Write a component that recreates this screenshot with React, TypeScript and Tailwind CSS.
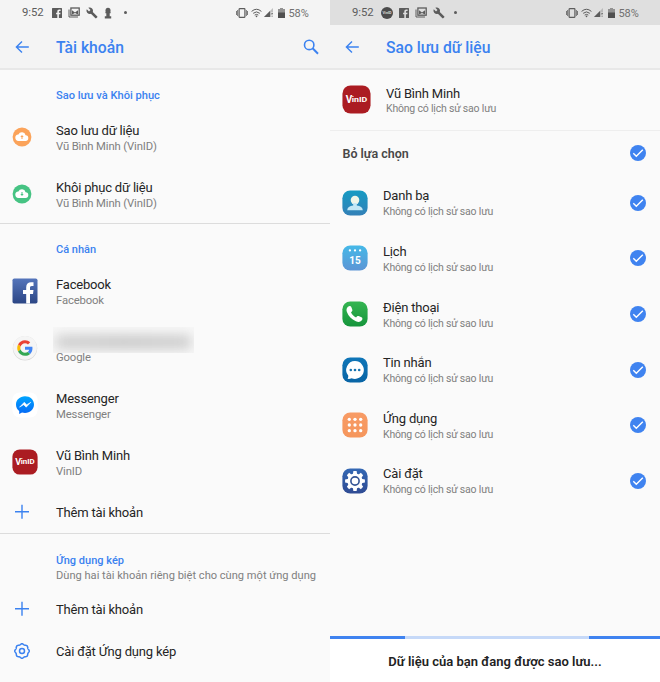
import type { ReactNode } from "react";

const BLUE = "#3b82f0";

function StatusBar({ withVin = false }: { withVin?: boolean }) {
  return (
    <div
      className={
        withVin
          ? "flex h-[25px] items-center bg-[#dfdfdf] px-[22px] text-[#5c5c5c]"
          : "flex h-[25px] items-center bg-[#f4f4f4] px-[22px] text-[#5c5c5c]"
      }
    >
      <span className="w-[30px] shrink-0 whitespace-nowrap pt-px text-[11.3px] leading-none tracking-[-0.1px]">9:52</span>
      {withVin && (
        <svg className="-ml-px mr-[6px] shrink-0" width="12" height="12" viewBox="0 0 12 12">
          <circle cx="6" cy="6" r="6" fill="#4c4c4c" />
          <text x="6" y="7.4" textAnchor="middle" fontSize="3.8" fontWeight="700" fill="#d8d8d8">VinID</text>
        </svg>
      )}
      <svg className="shrink-0" width="10" height="10" viewBox="0 0 10 10">
        <rect width="10" height="10" rx=".5" fill="currentColor" />
        <path d="M6.9 10V6.2H8.3L8.5 4.7H6.9V3.8c0-.5.2-.7.8-.7h.9V1.6H7.3C5.9 1.6 5.3 2.5 5.3 3.6v1.1H4.1v1.5h1.2V10z" className={withVin ? "fill-[#dfdfdf]" : "fill-[#f4f4f4]"} />
      </svg>
      <svg className="ml-[6px] shrink-0" width="12" height="11" viewBox="0 0 12 11" fill="none">
        <path d="M1 2.5V10h9" stroke="currentColor" strokeWidth="1" />
        <rect x="2.9" y="1" width="8.3" height="7.2" stroke="currentColor" strokeWidth="1.3" />
        <path d="M4 7.5V3.2L7 5.5l3-2.3v4.3L7 6z" fill="currentColor" />
      </svg>
      <svg className="ml-[6px] shrink-0" width="12" height="12" viewBox="0 0 24 24" fill="currentColor">
        <path d="M22.7 19l-9.1-9.1c.9-2.3.4-5-1.5-6.9-2-2-5-2.4-7.4-1.3L9 6 6 9 1.6 4.7C.4 7.1.9 10.1 2.9 12.1c1.9 1.9 4.6 2.4 6.9 1.5l9.1 9.1c.4.4 1 .4 1.4 0l2.3-2.3c.5-.4.5-1.1.1-1.4z" />
      </svg>
      {!withVin && (
        <svg className="ml-[6px] shrink-0" width="8" height="12" viewBox="0 0 8 12" fill="currentColor">
          <circle cx="4" cy="3.2" r="2.5" />
          <path d="M1.4 4.6h5.2v1.6H5.7v3.1H7.2v2.200H.8V9.300h1.500V6.200H1.400z" />
        </svg>
      )}
      <span className={withVin ? "ml-[9px] size-[3px] rounded-full bg-current" : "ml-[12px] size-[3px] rounded-full bg-current"} />
      <span className="flex-1" />
      <svg className="shrink-0" width="12" height="10" viewBox="0 0 12 10" fill="none" stroke="currentColor">
        <rect x="3.1" y=".7" width="5.8" height="8.6" rx=".5" strokeWidth="1.2" />
        <path d="M1.6 2v6M.5 3v4M10.4 2v6M11.5 3v4" strokeWidth=".8" />
      </svg>
      <svg className="ml-[3px] shrink-0" width="11" height="10" viewBox="0 0 11 10" fill="none" stroke="currentColor">
        <path d="M.6 3.4Q5.5-.9 10.4 3.4M2.2 5.3Q5.5 2.5 8.8 5.3M3.7 7.1Q5.5 5.7 7.3 7.1" strokeWidth="1" />
        <circle cx="5.5" cy="8.4" r=".8" fill="currentColor" stroke="none" />
      </svg>
      <svg className="ml-[2px] shrink-0" width="9" height="9" viewBox="0 0 9 9">
        <path d="M0 9L9 0v9z" fill="#aaa" opacity=".7" />
        <path d="M0 9L6 3v6z" fill="currentColor" />
        <path d="M7 4.5h2V9H7z" className={withVin ? "fill-[#dfdfdf]" : "fill-[#f4f4f4]"} />
        <path d="M7.4 5l1.4 1.5M8.8 5L7.4 6.5M8.1 7.6v1.2" stroke="currentColor" strokeWidth=".8" />
      </svg>
      <svg className="ml-[5px] shrink-0" width="7" height="10" viewBox="0 0 7 10">
        <path d="M2 0h3v1H7v9H0V1h2z" fill="#929292" />
        <path d="M0 4.5h7V10H0z" fill="#505050" />
      </svg>
      <span className="ml-[4px] w-[19.5px] shrink-0 whitespace-nowrap pt-px text-[11px] leading-none tracking-[-0.1px] text-[#707070]">58%</span>
    </div>
  );
}

function AppBar({ title, search = false }: { title: string; search?: boolean }) {
  return (
    <header className="flex h-[45px] items-center border-b-2 border-[#e8e8e8] bg-[#f4f4f4] pl-[15px] pr-[11px]">
      <svg width="14" height="14" viewBox="0 0 14 14" fill="none" stroke={BLUE} strokeWidth="1.4">
        <path d="M13.8 7H1.5M7 1.4L1.4 7L7 12.6" />
      </svg>
      <h1 className="ml-[27px] flex-1 pt-[3px] text-[15.7px] font-medium leading-none text-[#3b82f0]">{title}</h1>
      {search && (
        <svg width="16" height="16" viewBox="0 0 16 16" fill="none" stroke={BLUE}>
          <circle cx="6.2" cy="5.9" r="4.7" strokeWidth="1.6" />
          <path d="M9.6 9.3L15 14.7" strokeWidth="2" />
        </svg>
      )}
    </header>
  );
}

function CloudIcon({ color, down = false }: { color: string; down?: boolean }) {
  return (
    <svg width="20" height="20" viewBox="0 0 20 20">
      <circle cx="10" cy="10" r="9.4" fill={color} />
      <path d="M13.6 8.2A3.9 3.9 0 0 0 6.4 7.4 3.25 3.25 0 0 0 6.7 13.9H13.3A2.85 2.85 0 0 0 13.6 8.2z" fill="#fff" />
      <path d={down ? "M9.5 7.9h1v2h1.2L10 11.9 8.3 9.9h1.2z" : "M9.5 11.9h1v-2h1.2L10 7.9 8.3 9.9h1.2z"} fill={color} />
    </svg>
  );
}

function VinIcon({ size = 26 }: { size?: number }) {
  return (
    <svg width={size} height={size} viewBox="0 0 26 26">
      <rect x=".4" y=".4" width="25.2" height="25.2" rx="7.4" fill="#ab1c22" />
      <text x="3.3" y="16" fontSize="9" fontWeight="700" fill="#fff">V</text>
      <text x="8.7" y="15.4" fontSize="7.2" fontWeight="700" fill="#fff" textLength="14" lengthAdjust="spacingAndGlyphs">inID</text>
    </svg>
  );
}

function FacebookIcon() {
  return (
    <svg width="26" height="26" viewBox="0 0 26 26">
      <defs>
        <linearGradient id="fb" x2="0" y2="1">
          <stop stopColor="#5575bb" />
          <stop offset="1" stopColor="#2c4685" />
        </linearGradient>
      </defs>
      <rect x=".5" y=".5" width="25" height="25" rx="1.8" fill="url(#fb)" />
      <path d="M14.2 25.5V15.9H11V12.1h3.2V9.3c0-3.3 1.9-5 4.9-5h2.4v3.6h-1.7c-1.4 0-1.8.7-1.8 1.8v2.4h3.5l-.5 3.8h-3v9.6z" fill="#fff" />
    </svg>
  );
}

function GoogleIcon() {
  return (
    <svg width="26" height="26" viewBox="0 0 26 26">
      <circle cx="13" cy="13.3" r="12.2" fill="#d9d9d9" />
      <circle cx="13" cy="12.8" r="11.9" fill="#f5f5f5" />
      <g transform="translate(5.2 5.2) scale(.325)">
        <path fill="#EA4335" d="M24 9.5c3.54 0 6.71 1.22 9.21 3.6l6.85-6.85C35.9 2.38 30.47 0 24 0 14.62 0 6.51 5.38 2.56 13.22l7.98 6.19C12.43 13.72 17.74 9.5 24 9.5z" />
        <path fill="#4285F4" d="M46.98 24.55c0-1.57-.15-3.09-.38-4.55H24v9.02h12.94c-.58 2.96-2.26 5.48-4.78 7.18l7.73 6c4.51-4.18 7.09-10.36 7.09-17.65z" />
        <path fill="#FBBC05" d="M10.53 28.59c-.48-1.45-.76-2.99-.76-4.59s.27-3.14.76-4.59l-7.98-6.19C.92 16.46 0 20.12 0 24c0 3.88.92 7.54 2.56 10.78l7.97-6.19z" />
        <path fill="#34A853" d="M24 48c6.48 0 11.93-2.13 15.89-5.81l-7.73-6c-2.15 1.45-4.92 2.3-8.16 2.3-6.26 0-11.57-4.22-13.47-9.91l-7.98 6.19C6.51 42.62 14.62 48 24 48z" />
      </g>
    </svg>
  );
}

function MessengerIcon() {
  return (
    <svg width="26" height="26" viewBox="0 0 26 26">
      <defs>
        <linearGradient id="ms" x2="0" y2="1">
          <stop stopColor="#00a5ff" />
          <stop offset="1" stopColor="#0568f5" />
        </linearGradient>
      </defs>
      <rect x=".5" y=".5" width="25" height="25" rx="7" fill="#fff" />
      <path d="M13 4.3c-5.1 0-9 3.6-9 8.3 0 2.7 1.2 4.9 3.2 6.4v2.9l2.8-1.3c.9.3 1.9.4 3 .4 5.1 0 9-3.6 9-8.4s-3.9-8.3-9-8.3z" fill="url(#ms)" />
      <path d="M7.5 15.2l4.8-5 2.4 2.5 4.2-2.5-4.7 5-2.5-2.5z" fill="#fff" stroke="#fff" strokeWidth=".5" />
    </svg>
  );
}

function PlusIcon() {
  return (
    <svg width="20" height="20" viewBox="0 0 20 20" stroke={BLUE} strokeWidth="1.4">
      <path d="M10 2.8v14M3 9.8h14" />
    </svg>
  );
}

const scallop =
  Array.from({ length: 97 }, (_, i) => {
    const a = (i / 96) * Math.PI * 2;
    const r = 6.8 + 0.45 * Math.cos(a * 8);
    return `${i ? "L" : "M"}${(10 + r * Math.cos(a)).toFixed(2)} ${(10 + r * Math.sin(a)).toFixed(2)}`;
  }).join("") + "Z";

function GearOutline() {
  return (
    <svg width="20" height="20" viewBox="0 0 20 20" fill="none" stroke={BLUE} strokeWidth="1.5">
      <path d={scallop} />
      <circle cx="10" cy="10" r="2.5" />
    </svg>
  );
}

function Tile({ id, from, to, children }: { id: string; from: string; to: string; children: ReactNode }) {
  return (
    <svg width="26" height="26" viewBox="0 0 26 26">
      <defs>
        <linearGradient id={id} x2="0" y2="1">
          <stop stopColor={from} />
          <stop offset="1" stopColor={to} />
        </linearGradient>
      </defs>
      <rect x=".4" y=".4" width="25.2" height="25.2" rx="7.8" fill={`url(#${id})`} />
      {children}
    </svg>
  );
}

const items: { title: string; icon: ReactNode }[] = [
  {
    title: "Danh bạ",
    icon: (
      <Tile id="t1" from="#169bc3" to="#3380b7">
        <circle cx="13" cy="10.1" r="4.3" fill="#eef5e8" />
        <path d="M11.2 13h3.6v2.6c3.7.6 5.7 1.9 6 4.6H5.2c.3-2.7 2.3-4 6-4.6z" fill="#c2e7f5" />
      </Tile>
    ),
  },
  {
    title: "Lịch",
    icon: (
      <Tile id="t2" from="#45b9e8" to="#5c95d5">
        <g fill="#fff">
          <circle cx="7.9" cy="5.4" r="1.15" />
          <circle cx="13" cy="5.4" r="1.15" />
          <circle cx="18.1" cy="5.4" r="1.15" />
          <text x="13" y="18.7" textAnchor="middle" fontSize="11" fontWeight="700" textLength="11.5" lengthAdjust="spacingAndGlyphs">15</text>
        </g>
      </Tile>
    ),
  },
  {
    title: "Điện thoại",
    icon: (
      <Tile id="t3" from="#35b552" to="#15953b">
        <path transform="translate(-.6 0)" d="M6.6 5.8c1.3-1.2 2.8-1 3.3.2l1 2.7c.4 1-.3 1.8-1.3 2.5 1 2.3 2.7 4.1 5.1 5.2.7-1 1.5-1.7 2.5-1.3l2.9 1.2c1.2.5 1.2 2.2.1 3.3-1.3 1.5-3.4 1.7-5.7.6-4.4-2-7.4-5-9-9.2-.8-2.1-.3-4.1 1.1-5.2z" fill="#fff" />
      </Tile>
    ),
  },
  {
    title: "Tin nhắn",
    icon: (
      <Tile id="t4" from="#0f76b8" to="#0864a5">
        <path d="M13 4.1a8.9 8.9 0 1 1-3.5 17.1c-1.1.7-2.7.8-4 .6.8-1 .9-2.3.7-3.2A8.9 8.9 0 0 1 13 4.1z" fill="#fff" />
        <g fill="#1673b0">
          <circle cx="8.8" cy="13" r="1.3" />
          <circle cx="13" cy="13" r="1.3" />
          <circle cx="17.2" cy="13" r="1.3" />
        </g>
      </Tile>
    ),
  },
  {
    title: "Ứng dụng",
    icon: (
      <Tile id="t5" from="#f89b65" to="#f5965c">
        {[7.3, 13, 18.7].map((y) =>
          [7.3, 13, 18.7].map((x) => <circle key={`${x}-${y}`} cx={x} cy={y} r="1.65" fill="#fff" />),
        )}
      </Tile>
    ),
  },
  {
    title: "Cài đặt",
    icon: (
      <Tile id="t6" from="#3468b4" to="#2f4b93">
        <g fill="#fff">
          {[0, 45, 90, 135, 180, 225, 270, 315].map((a) => (
            <path key={a} d="M10.7 7l.7-3.9h3.2l.7 3.9z" transform={`rotate(${a} 13 13)`} />
          ))}
          <circle cx="13" cy="13" r="7.6" />
        </g>
        <circle cx="13" cy="13" r="4.1" fill="none" stroke="#345495" strokeWidth="1.6" />
      </Tile>
    ),
  },
];

function Check() {
  return (
    <svg width="16" height="16" viewBox="0 0 16 16">
      <circle cx="8" cy="8" r="8" fill="#3f83f0" />
      <path d="M3.3 8.2l3 3 6.5-6.5" fill="none" stroke="#fff" strokeWidth="1.4" />
    </svg>
  );
}

function Row({ icon, title, sub }: { icon: ReactNode; title?: string; sub: string }) {
  return (
    <div className="flex h-[57px] items-center pl-3">
      <div className="w-[44px] shrink-0 pb-px">{icon}</div>
      <div className="pt-[3px]">
        {title ? (
          <div className="h-4 whitespace-nowrap text-[13px] leading-4 tracking-[-0.19px] text-[#252525]">{title}</div>
        ) : (
          <div className="-mb-[3px] -ml-[3px] -mt-[7px] h-[26px] w-[141px] overflow-hidden bg-[#f8f8f8]">
            <div className="ml-[3px] mt-[8px] h-[14px] w-[135px] bg-linear-to-r from-[#cfcfcf] via-[#c8c8c8] to-[#cecece] blur-[6px]" />
          </div>
        )}
        <div className="h-4 whitespace-nowrap text-[11.3px] leading-4 tracking-[-0.14px] text-[#808080]">{sub}</div>
      </div>
    </div>
  );
}

function ActionRow({ icon, title }: { icon: ReactNode; title: string }) {
  return (
    <div className="flex h-[42px] items-center pl-3">
      <div className="w-[44px] shrink-0">{icon}</div>
      <div className="whitespace-nowrap pt-[2px] text-[13px] leading-4 tracking-[-0.19px] text-[#252525]">{title}</div>
    </div>
  );
}

export default function App() {
  return (
    <div className="flex h-[682px] w-[660px] overflow-hidden bg-[#fafafa] font-['Roboto',sans-serif]">
      <section className="flex w-[330px] shrink-0 flex-col">
        <StatusBar />
        <AppBar title="Tài khoản" search />
        <div className="h-[154px] border-b border-[#dcdcdc]">
          <h2 className="h-[39px] pl-14 pt-[18px] text-[11.1px] font-medium leading-4 text-[#3b82f0]">Sao lưu và Khôi phục</h2>
          <Row icon={<CloudIcon color="#fba35a" />} title="Sao lưu dữ liệu" sub="Vũ Bình Minh (VinID)" />
          <Row icon={<CloudIcon color="#46c383" down />} title="Khôi phục dữ liệu" sub="Vũ Bình Minh (VinID)" />
        </div>
        <div className="h-[310px] border-b border-[#dcdcdc]">
          <h2 className="h-[39px] pl-14 pt-[18px] text-[11px] font-medium leading-4 text-[#3b82f0]">Cá nhân</h2>
          <Row icon={<FacebookIcon />} title="Facebook" sub="Facebook" />
          <Row icon={<GoogleIcon />} sub="Google" />
          <Row icon={<MessengerIcon />} title="Messenger" sub="Messenger" />
          <Row icon={<VinIcon />} title="Vũ Bình Minh" sub="VinID" />
          <ActionRow icon={<PlusIcon />} title="Thêm tài khoản" />
        </div>
        <div>
          <div className="h-[54px] whitespace-nowrap pl-14 pt-[18px]">
            <h2 className="text-[11px] font-medium leading-[17px] text-[#3b82f0]">Ứng dụng kép</h2>
            <p className="text-[11.1px] leading-[14px] text-[#808080]">Dùng hai tài khoản riêng biệt cho cùng một ứng dụng</p>
          </div>
          <ActionRow icon={<PlusIcon />} title="Thêm tài khoản" />
          <ActionRow icon={<GearOutline />} title="Cài đặt Ứng dụng kép" />
        </div>
      </section>

      <section className="flex w-[330px] shrink-0 flex-col">
        <StatusBar withVin />
        <AppBar title="Sao lưu dữ liệu" />
        <div className="flex h-[61px] items-center border-b border-[#eeeeee] pl-3">
          <div className="w-[44px] shrink-0 pb-px"><VinIcon size={29} /></div>
          <div className="pt-[2px]">
            <div className="whitespace-nowrap text-[13px] leading-4 tracking-[-0.19px] text-[#252525]">Vũ Bình Minh</div>
            <div className="whitespace-nowrap text-[10.5px] leading-[14px] tracking-[-0.2px] text-[#808080]">Không có lịch sử sao lưu</div>
          </div>
        </div>
        <div className="flex h-[44px] items-center justify-between pl-[12.5px] pr-[14px]">
          <h2 className="pt-px text-[12.5px] font-semibold leading-4 text-[#484848]">Bỏ lựa chọn</h2>
          <Check />
        </div>
        <ul className="flex-1">
          {items.map((it) => (
            <li key={it.title} className="flex h-[55.6px] items-center pl-3 pr-[14px]">
              <div className="w-[41px] shrink-0">{it.icon}</div>
              <div className="flex-1 pt-[2.4px]">
                <div className="whitespace-nowrap text-[13px] leading-4 tracking-[-0.19px] text-[#252525]">{it.title}</div>
                <div className="whitespace-nowrap text-[10.5px] leading-[15px] tracking-[-0.2px] text-[#808080]">Không có lịch sử sao lưu</div>
              </div>
              <Check />
            </li>
          ))}
        </ul>
        <footer className="h-[46px] bg-white">
          <div className="flex h-[3px]">
            <div className="w-[75px] bg-[#3f83f0]" />
            <div className="flex-1 bg-[#c6d9f8]" />
            <div className="w-[71px] bg-[#3f83f0]" />
          </div>
          <div className="flex h-[43px] items-center justify-center pt-[2px] text-[13px] font-semibold text-[#222]">
            Dữ liệu của bạn đang được sao lưu...
          </div>
        </footer>
      </section>
    </div>
  );
}
